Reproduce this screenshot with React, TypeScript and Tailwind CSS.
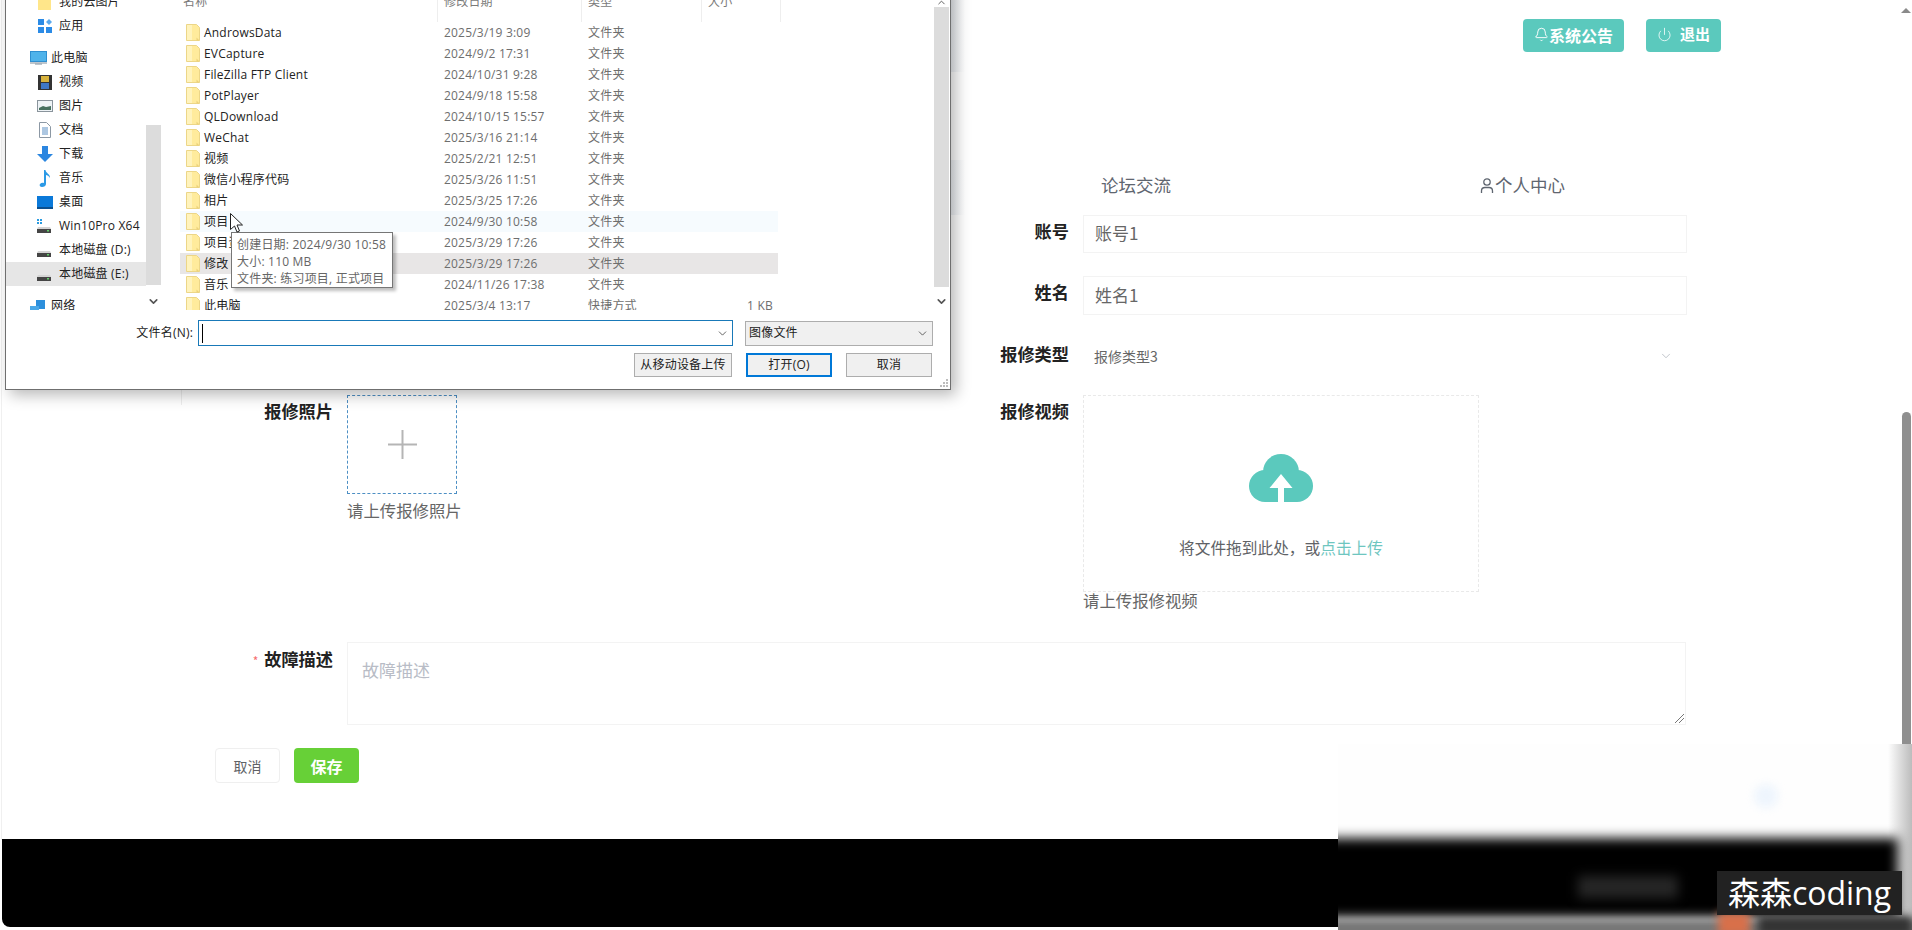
import { Bell, ChevronDown, ChevronUp, Power } from "lucide-react";
import type { ReactNode } from "react";

const files = [
  { name: "AndrowsData", date: "2025/3/19 3:09", type: "文件夹" },
  { name: "EVCapture", date: "2024/9/2 17:31", type: "文件夹" },
  { name: "FileZilla FTP Client", date: "2024/10/31 9:28", type: "文件夹" },
  { name: "PotPlayer", date: "2024/9/18 15:58", type: "文件夹" },
  { name: "QLDownload", date: "2024/10/15 15:57", type: "文件夹" },
  { name: "WeChat", date: "2025/3/16 21:14", type: "文件夹" },
  { name: "视频", date: "2025/2/21 12:51", type: "文件夹" },
  { name: "微信小程序代码", date: "2025/3/26 11:51", type: "文件夹" },
  { name: "相片", date: "2025/3/25 17:26", type: "文件夹" },
  { name: "项目", date: "2024/9/30 10:58", type: "文件夹", hover: true },
  { name: "项目资料", date: "2025/3/29 17:26", type: "文件夹" },
  { name: "修改", date: "2025/3/29 17:26", type: "文件夹", selected: true },
  { name: "音乐", date: "2024/11/26 17:38", type: "文件夹" },
];

function FolderIcon() {
  return (
    <svg width="14" height="17" viewBox="0 0 14 17" className="shrink-0">
      <path d="M.5.5h10l3 3v13H.5z" fill="#ffeb9c" stroke="#ecd688" />
      <path d="M1 1h5v15H1z" fill="#fff3bd" />
      <path d="M10.500 13.500l3 3h-3z" fill="#ecd27a" />
    </svg>
  );
}

function Monitor() {
  return (
    <svg width="17" height="15" viewBox="0 0 17 15">
      <rect x="0.500" y="0.500" width="16" height="10" fill="#4fb3ea" stroke="#2f8fd0" />
      <path d="M5 13h7M0 12h17" stroke="#a9b4bd" strokeWidth="1.500" />
    </svg>
  );
}

function Disk({ win }: { win?: boolean }) {
  return (
    <svg width="15" height="15" viewBox="0 0 15 15">
      {win && <path d="M0 0h2v2H0zM3 0h2v2H3zM0 3h2v2H0zM3 3h2v2H3z" fill="#2a9be0" />}
      <path d="M1 8h12l1 2H0z" fill="#d4d4d4" />
      <rect x="0" y="10" width="14" height="4" fill="#454545" />
      <rect x="10" y="11" width="2" height="1.500" fill="#63d06b" />
    </svg>
  );
}

function SideIcon({ kind }: { kind: string }) {
  if (kind === "apps")
    return (
      <svg width="14" height="14" viewBox="0 0 14 14" fill="#2b8be6">
        <rect width="6" height="6" />
        <rect y="8" width="6" height="6" />
        <rect x="8" y="8" width="6" height="6" />
        <path d="M11 0l3 3-3 3-3-3z" fill="#5aa9ee" />
      </svg>
    );
  if (kind === "video")
    return (
      <svg width="14" height="15" viewBox="0 0 14 15">
        <rect width="14" height="15" fill="#333" />
        <rect x="3" y="1" width="8" height="6" fill="#d7b23c" />
        <rect x="3" y="8" width="8" height="6" fill="#3f77c4" />
      </svg>
    );
  if (kind === "image")
    return (
      <svg width="16" height="12" viewBox="0 0 16 12">
        <rect x="0.500" y="0.500" width="15" height="11" fill="#eef3f6" stroke="#8a949c" />
        <path d="M2 8l4-2 3 1 5-1v4H2z" fill="#47705f" />
      </svg>
    );
  if (kind === "doc")
    return (
      <svg width="12" height="16" viewBox="0 0 12 16">
        <path d="M.5.5h7l4 4v11H.5z" fill="#fff" stroke="#8c98a4" />
        <path d="M3 6h6M3 8h6M3 10h6M3 12h6" stroke="#5a8fc4" />
      </svg>
    );
  if (kind === "down")
    return (
      <svg width="16" height="16" viewBox="0 0 16 16">
        <path d="M5 0h6v8h5l-8 8-8-8h5z" fill="#2b86e0" />
      </svg>
    );
  if (kind === "music")
    return (
      <svg width="12" height="17" viewBox="0 0 12 17">
        <path d="M5 0h1.500c0 3 5 4 4.500 8-1-2-3-3-4-3v9c0 2-2 3-4 3s-3-2-2-3 2.500-1.500 4-1z" fill="#2b9ae6" />
      </svg>
    );
  if (kind === "desk")
    return (
      <svg width="16" height="13" viewBox="0 0 16 13">
        <rect width="16" height="13" fill="#0a79d9" />
        <rect x="0" y="11" width="16" height="2" fill="#0b4f8e" />
      </svg>
    );
  if (kind === "win") return <Disk win />;
  if (kind === "disk") return <Disk />;
  return <span className="block h-[15px] w-[13px] bg-[#ffe68a]" />;
}

function SideRow({ icon, label, selected }: { icon: string; label: string; selected?: boolean }) {
  return (
    <div className={`flex h-6 w-[140px] items-center ${selected ? "bg-[#e6e6e6]" : ""}`}>
      <span className="flex w-[53px] justify-end pr-[6px]">
        <span className="flex w-[17px] justify-center">
          <SideIcon kind={icon} />
        </span>
      </span>
      <span className="whitespace-nowrap">{label}</span>
    </div>
  );
}

function SideHead({ label, net }: { label: string; net?: boolean }) {
  return (
    <div className="flex h-6 w-[140px] items-center pl-[24px]">
      <span className="flex w-[21px]">
        {net ? (
          <svg width="16" height="13" viewBox="0 0 16 13">
            <rect x="6" y="0" width="9" height="9" fill="#2c8fdc" />
            <rect x="0" y="6" width="9" height="7" fill="#4aa8e8" />
          </svg>
        ) : (
          <Monitor />
        )}
      </span>
      <span>{label}</span>
    </div>
  );
}

function FileRow({ name, date, type, hover, selected, size }: {
  name: string;
  date: string;
  type: string;
  hover?: boolean;
  selected?: boolean;
  size?: string;
}) {
  return (
    <div
      className={`flex h-[21px] w-[598px] items-center pl-[6px] ${
        selected ? "bg-[#e8e6e6]" : hover ? "bg-[#f6fbfe]" : ""
      }`}
    >
      <span className="flex w-[258px] items-center gap-[4px] whitespace-nowrap text-[#222]">
        <FolderIcon />
        {name}
      </span>
      <span className="w-[144px] text-[#6e6e6e]">{date}</span>
      <span className="w-[159px] text-[#6e6e6e]">{type}</span>
      <span className="text-[#6e6e6e]">{size}</span>
    </div>
  );
}

function FileDialog() {
  return (
    <div className="absolute top-[-20px] left-[5px] z-20 flex h-[410px] w-[946px] flex-col border border-[#6f6f6f] bg-white text-xs tracking-[0.2px] text-[#222] shadow-[5px_5px_14px_rgba(0,0,0,0.28)] [font-family:'Open_Sans','Noto_Sans_CJK_SC',sans-serif]">
      <div className="flex h-[329px] overflow-hidden">
        {/* sidebar */}
        <div className="flex w-[174px] shrink-0">
          <div className="w-[140px] pt-[9px]">
            <SideRow icon="folder" label="我的云图片" />
            <SideRow icon="apps" label="应用" />
            <div className="h-2" />
            <SideHead label="此电脑" />
            <SideRow icon="video" label="视频" />
            <SideRow icon="image" label="图片" />
            <SideRow icon="doc" label="文档" />
            <SideRow icon="down" label="下载" />
            <SideRow icon="music" label="音乐" />
            <SideRow icon="desk" label="桌面" />
            <SideRow icon="win" label="Win10Pro X64" />
            <SideRow icon="disk" label="本地磁盘 (D:)" />
            <SideRow icon="disk" label="本地磁盘 (E:)" selected />
            <div className="h-2" />
            <SideHead label="网络" net />
          </div>
          <div className="relative w-[15px]">
            <div className="mt-[144px] h-[160px] bg-[#dcdcdc]" />
            <ChevronDown size={13} strokeWidth={3} className="absolute top-[314px] left-[1px] text-[#555]" />
          </div>
        </div>
        {/* file list */}
        <div className="flex min-w-0 flex-1">
          <div className="w-[754px]">
            <div className="flex h-[41px] pt-[13px] text-[#7a7a7a]">
              <span className="w-[257px] pl-[3px]">名称</span>
              <span className="w-[144px] border-l border-[#eeeeee] pl-[6px]">修改日期</span>
              <span className="w-[120px] border-l border-[#eeeeee] pl-[6px]">类型</span>
              <span className="w-[80px] border-r border-l border-[#eeeeee] pl-[6px]">大小</span>
            </div>
            <div>
              {files.map((f) => (
                <FileRow key={f.name} {...f} />
              ))}
              <FileRow name="此电脑" date="2025/3/4 13:17" type="快捷方式" size="1 KB" />
            </div>
          </div>
          <div className="relative mt-[26px] h-[280px] w-[15px] shrink-0 bg-[#dcdcdc]">
            <ChevronUp size={11} strokeWidth={2} className="absolute top-[-10px] left-[2px] text-[#555]" />
            <ChevronDown size={13} strokeWidth={3} className="absolute top-[288px] left-[1px] text-[#555]" />
          </div>
        </div>
      </div>
      {/* bottom controls */}
      <div className="flex items-center pt-[10px]">
        <span className="w-[187px] text-right text-[#222]">文件名(N):</span>
        <div className="ml-[5px] flex h-[26px] w-[535px] items-center justify-between border border-[#1979b8] px-[3px]">
          <span className="h-[19px] w-px bg-black" />
          <ChevronDown size={13} strokeWidth={1.5} className="text-[#444]" />
        </div>
        <div className="ml-[12px] flex h-[25px] w-[188px] items-center justify-between border border-[#adadad] bg-[#f0f0f0] px-[3px]">
          <span>图像文件</span>
          <ChevronDown size={13} strokeWidth={1.5} className="text-[#444]" />
        </div>
      </div>
      <div className="mt-[7px] flex items-start pl-[628px]">
        <button className="h-[24px] w-[98px] border border-[#adadad] bg-[#f0f0f0]">从移动设备上传</button>
        <button className="ml-[14px] h-[24px] w-[86px] border-2 border-[#0078d7] bg-[#f0f0f0]">打开(O)</button>
        <button className="ml-[14px] h-[24px] w-[86px] border border-[#adadad] bg-[#f0f0f0]">取消</button>
      </div>
      <svg width="10" height="10" viewBox="0 0 10 10" className="absolute right-[1px] bottom-[1px]" fill="#bdbdbd">
        <rect x="7" y="1" width="2" height="2" />
        <rect x="4" y="4" width="2" height="2" />
        <rect x="7" y="4" width="2" height="2" />
        <rect x="1" y="7" width="2" height="2" />
        <rect x="4" y="7" width="2" height="2" />
        <rect x="7" y="7" width="2" height="2" />
      </svg>

      {/* tooltip over the list */}
      <div className="absolute top-[251px] left-[225px] h-[56px] w-[162px] border border-[#767676] bg-white pt-[3px] pl-[5px] leading-[17px] text-[#666] shadow-[3px_3px_3px_rgba(0,0,0,0.25)]">
        <div>创建日期: 2024/9/30 10:58</div>
        <div>大小: 110 MB</div>
        <div>文件夹: 练习项目, 正式项目</div>
      </div>

      {/* mouse pointer */}
      <svg width="13" height="20" viewBox="0 0 13 20" className="absolute top-[232px] left-[224px]">
        <path d="M.5.500v16l4-3.500 2.500 6 2.500-1-2.500-6h5.500z" fill="#fff" stroke="#222" />
      </svg>
    </div>
  );
}

function Field({ label, required, height, children, className }: {
  label: string;
  required?: boolean;
  height?: string;
  children: ReactNode;
  className?: string;
}) {
  return (
    <div className={`flex ${className ?? ""}`}>
      <label className={`w-[152px] shrink-0 text-right text-[17.200px] font-bold text-[#222] ${height ?? ""}`}>
        {required && <span className="mr-[6px] text-xs font-normal text-[#f56c6c]">*</span>}
        {label}
      </label>
      <div className="ml-[14px] min-w-0 flex-1">{children}</div>
    </div>
  );
}

function TextBox({ value, h }: { value: string; h: string }) {
  return (
    <div className={`flex w-[604px] items-center border border-[#f3f3f3] pb-[2px] pl-[11px] text-[17px] text-[#666] ${h}`}>
      {value}
    </div>
  );
}

export default function App() {
  return (
    <div className="relative flex h-[930px] w-[1912px] flex-col overflow-hidden bg-white [font-family:'Noto_Sans_CJK_SC',sans-serif]">
      <FileDialog />

      {/* top bar */}
      <header className="flex h-[160px] justify-end gap-[22px] pt-[19px] pr-[191px]">
        <button className="flex h-[33px] w-[101px] items-center justify-center rounded bg-[#5bc9bd] pb-[2px] text-base font-bold text-white">
          <Bell size={15} strokeWidth={1.5} />
          系统公告
        </button>
        <button className="flex h-[33px] w-[75px] items-center justify-center gap-2 rounded bg-[#5bc9bd] pb-[2px] text-[15px] font-bold text-white">
          <Power size={15} strokeWidth={1.25} />
          退出
        </button>
      </header>

      {/* nav */}
      <nav className="flex h-[55px] items-start pt-[12px] pl-[1101px] text-[17.500px] leading-[26px] text-[#5f6670]">
        <span className="w-[379px]">论坛交流</span>
        <span className="flex items-center">
          <svg width="14" height="15" viewBox="0 0 14 15" fill="none" stroke="#5f6670" strokeWidth="1.300">
            <circle cx="7" cy="4" r="3.200" />
            <path d="M1.500 15v-2c0-2 1.500-3.500 3.500-3.500h4c2 0 3.500 1.500 3.500 3.500v2" />
          </svg>
          <span className="ml-[1px]">个人中心</span>
        </span>
      </nav>

      {/* form */}
      <main className="pl-[181px]">
        <div className="grid h-[427px] grid-cols-[736px_1fr]">
          <div className="pt-[180px]">
            <Field label="报修照片" height="pt-[3px]">
              <div className="flex h-[99px] w-[110px] items-center justify-center border border-dashed border-[#4d8fc4]">
                <svg width="29" height="29" viewBox="0 0 29 29" stroke="#b5b5b5" strokeWidth="2">
                  <path d="M0 14.500h29M14.500 0v29" />
                </svg>
              </div>
              <div className="mt-[4px] text-[16.400px] text-[#666]">请上传报修照片</div>
            </Field>
          </div>
          <div>
            <Field label="账号" height="pt-[3px]" className="mb-[23px]">
              <TextBox value="账号1" h="h-[38px]" />
            </Field>
            <Field label="姓名" height="pt-[3px]" className="mb-[21px]">
              <TextBox value="姓名1" h="h-[39px]" />
            </Field>
            <Field label="报修类型" height="pt-[5px]" className="mb-[20px]">
              <div className="flex h-[39px] w-[604px] items-center justify-between pr-[14px] pl-[11px] text-sm text-[#666]">
                报修类型3
                <ChevronDown size={14} strokeWidth={1.2} className="text-[#a8adb5]" />
              </div>
            </Field>
            <Field label="报修视频" height="pt-[3px]">
              <div className="flex h-[197px] w-[396px] flex-col items-center border border-dashed border-[#e9e9e9] pt-[58px]">
                <svg width="64" height="48" viewBox="0 0 64 48" fill="#5bc9bd">
                  <circle cx="32" cy="18" r="18" />
                  <circle cx="16" cy="32" r="16" />
                  <circle cx="48" cy="32" r="16" />
                  <rect x="16" y="26" width="32" height="22" />
                  <path d="M32 20l11.500 14H35v14h-6V34H20.500z" fill="#fff" />
                </svg>
                <div className="mt-[34px] text-[15.700px] leading-6 text-[#606266]">
                  将文件拖到此处，或<span className="text-[#6ec6c0]">点击上传</span>
                </div>
              </div>
              <div className="-mt-[4px] text-[16.400px] text-[#666]">请上传报修视频</div>
            </Field>
          </div>
        </div>
        <Field label="故障描述" required height="pt-[4px]">
          <div className="relative h-[83px] w-[1339px] border border-[#f3f3f3] pt-[14px] pl-[14px] text-[17px] text-[#b8bcc6]">
            故障描述
            <svg width="9" height="9" viewBox="0 0 9 9" stroke="#777" className="absolute right-[1px] bottom-[1px]">
              <path d="M0 9l9-9M4 9l5-5" />
            </svg>
          </div>
        </Field>
        <div className="mt-[23px] flex gap-[14px] pl-[34px]">
          <button className="h-[35px] w-[65px] rounded border border-[#efefef] text-sm text-[#606266]">取消</button>
          <button className="h-[35px] w-[65px] rounded bg-[#67d037] text-base font-bold text-white">保存</button>
        </div>
      </main>

      {/* footer */}
      <footer className="mt-auto mb-[3px] ml-[2px] h-[88px] rounded-bl-[8px] bg-black" />

      {/* page scrollbar */}
      <div className="absolute top-[8px] right-[1px] h-0 w-0 border-x-[5px] border-b-[5px] border-x-transparent border-b-[#8a8a8a]" />
      <div className="absolute top-[412px] right-[1px] h-[340px] w-[9px] rounded-t-full bg-[#8f8f8f]" />

      {/* faint bits of the page around the dialog */}
      <div className="absolute top-0 left-[951px] z-10 h-[72px] w-[14px] bg-gradient-to-r from-[#eef1f5] to-white" />
      <div className="absolute top-[160px] left-[951px] z-10 h-[55px] w-[14px] bg-gradient-to-r from-[#eef1f5] to-white" />
      <div className="absolute top-[389px] left-[181px] h-[16px] w-px bg-[#eeeeee]" />
      <div className="absolute top-0 left-[1px] h-[840px] w-px bg-[#f0f0f0]" />

      {/* blurred corner */}
      <div className="absolute top-[744px] left-[1338px] h-[186px] w-[574px] overflow-hidden bg-[#fefefe]">
        <div className="absolute top-[40px] left-[416px] h-6 w-6 rounded-full bg-[#eef5fd] blur-[4px]" />
        <div className="absolute top-0 right-0 h-full w-[24px] bg-gradient-to-r from-[#fefefe] to-[#bcbcbc]" />
        <div className="absolute top-[94px] left-[-30px] h-[80px] w-[590px] bg-black blur-[6px]" />
        <div className="absolute top-[132px] left-[240px] h-[22px] w-[100px] bg-[#262626] blur-[6px]" />
        <div className="absolute top-[176px] left-[-20px] h-[20px] w-[600px] bg-[#777] blur-[3px]" />
        <div className="absolute top-[168px] left-[380px] h-[24px] w-[32px] bg-[#d8704a] blur-[4px]" />
        <div className="absolute top-[172px] left-[420px] h-[20px] w-[154px] bg-[#333] blur-[4px]" />
      </div>

      {/* watermark */}
      <div className="absolute top-[871px] left-[1717px] flex h-[44px] w-[185px] items-center justify-center whitespace-nowrap bg-[#222222] text-[32px] leading-none text-white [font-family:'Open_Sans','Noto_Sans_CJK_SC',sans-serif]">
        森森coding
      </div>
    </div>
  );
}
